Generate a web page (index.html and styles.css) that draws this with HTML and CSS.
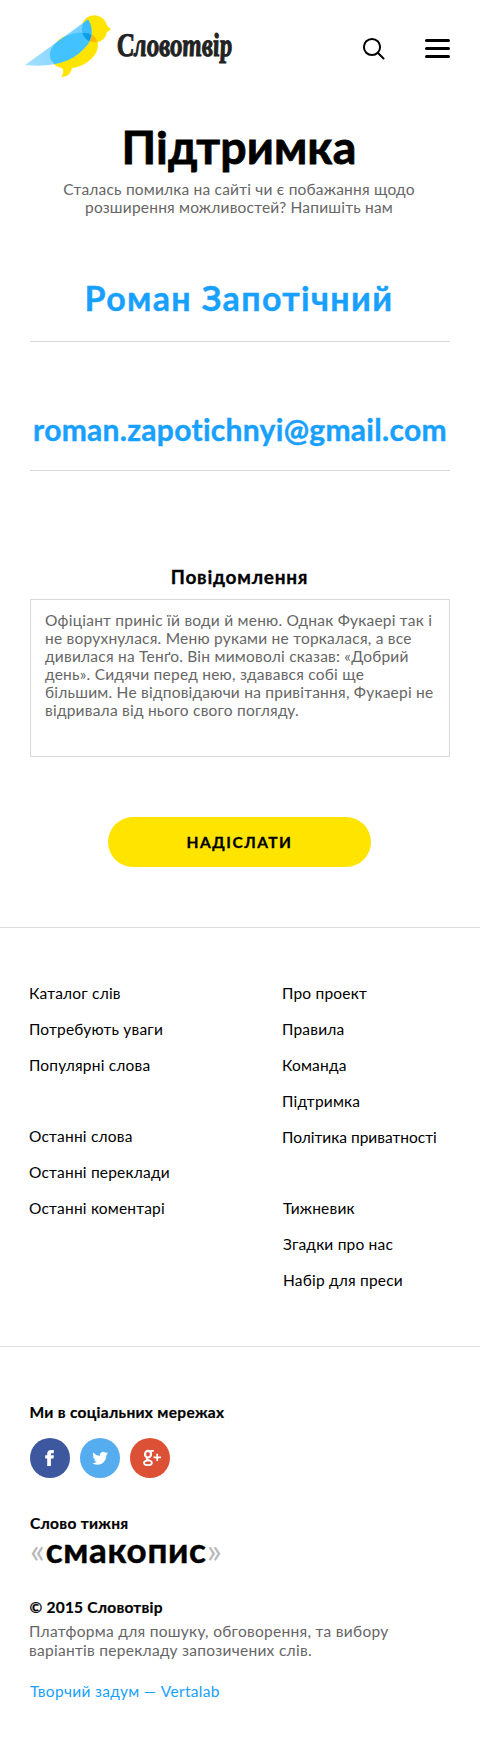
FILE: index.html
```html
<!DOCTYPE html>
<html lang="uk">
<head>
<meta charset="utf-8">
<title>Підтримка — Словотвір</title>
<link rel="stylesheet" href="styles.css">
</head>
<body>
<header class="header">
  <a class="logo" href="#" aria-label="Словотвір">
    <svg width="230" height="74" viewBox="20 11 230 74">
      <defs>
        <linearGradient id="wing" x1="26" y1="0" x2="92" y2="0" gradientUnits="userSpaceOnUse">
          <stop offset="0" stop-color="#a4e0ff"/>
          <stop offset="1" stop-color="#6accff"/>
        </linearGradient>
        <clipPath id="wing-clip"><path d="M25 64L88 18.500C93 26 92.500 36 88 43C75 60 55 67 25 64Z"/></clipPath>
        <clipPath id="head-clip"><circle cx="95" cy="28.500" r="13"/></clipPath>
      </defs>
      <path fill="#ffe400" d="M107 24.500L111 28.500L107 31A13 13 0 0 1 97.500 41.200C99.500 49 94 57 86 62C81 65 77 66.500 72 67C71 72 68 76 61 76Q65 71 62 67C57 66 53 64 51.500 58C48 43 64 31 82 31.500A13 13 0 1 1 107 24.500Z"/>
      <path fill="#ffb800" d="M90 32.500Q96 35 97.500 41.200Q93 41.800 89 40.200Z"/>
      <path fill="url(#wing)" d="M25 64L88 18.500C93 26 92.500 36 88 43C75 60 55 67 25 64Z"/>
      <g clip-path="url(#wing-clip)">
        <ellipse cx="74" cy="49" rx="25" ry="16" transform="rotate(-20 74 49)" fill="#42c2ff"/>
        <circle cx="95" cy="28.500" r="13" fill="#3cbcfc"/>
        <ellipse cx="74" cy="49" rx="25" ry="16" transform="rotate(-20 74 49)" fill="#0a9fe8" clip-path="url(#head-clip)" class="overlap"/>
        <path fill="#0a9fe8" d="M82.500 32Q88 31.500 92 34Q91 38 89 40Q84 37 82.500 32Z"/>
      </g>
      <text class="wordmark" transform="translate(118 54.500) skewX(5)" textLength="115" lengthAdjust="spacingAndGlyphs">Словотвір</text>
    </svg>
  </a>
  <div class="actions">
    <svg class="search" width="24" height="24" viewBox="0 0 24 24"><circle cx="10" cy="10" r="8.100"/><path d="M16 16L21.500 21.500"/></svg>
    <svg class="burger" width="25" height="22" viewBox="0 0 25 22"><path d="M1.500 3.500H23.500M1.500 11.500H23.500M1.500 19.500H23.500"/></svg>
  </div>
</header>

<main class="main">
  <h1 class="title">Підтримка</h1>
  <p class="intro">Сталась помилка на сайті чи є побажання щодо<br>розширення можливостей? Напишіть нам</p>
  <div class="field field-name">Роман Запотічний</div>
  <div class="field field-email">roman.zapotichnyi@gmail.com</div>
  <div class="label">Повідомлення</div>
  <div class="message">Офіціант приніс їй води й меню. Однак Фукаері так і<br>не ворухнулася. Меню руками не торкалася, а все<br>дивилася на Тенґо. Він мимоволі сказав: «Добрий<br>день». Сидячи перед нею, здавався собі ще<br>більшим. Не відповідаючи на привітання, Фукаері не<br>відривала від нього свого погляду.</div>
  <button class="submit">НАДІСЛАТИ</button>
</main>

<nav class="links">
  <div class="col">
    <ul><li>Каталог слів</li><li>Потребують уваги</li><li>Популярні слова</li></ul>
    <ul><li>Останні слова</li><li>Останні переклади</li><li>Останні коментарі</li></ul>
  </div>
  <div class="col">
    <ul><li>Про проект</li><li>Правила</li><li>Команда</li><li>Підтримка</li><li class="tight">Політика приватності</li></ul>
    <ul class="shifted"><li>Тижневик</li><li>Згадки про нас</li><li>Набір для преси</li></ul>
  </div>
</nav>

<footer class="footer">
  <h2 class="heading">Ми в соціальних мережах</h2>
  <div class="socials">
    <svg width="40" height="40" viewBox="0 0 40 40"><circle cx="20" cy="20" r="20" fill="#3d589f"/><path fill="#fff" d="M17.200 28V20.500H15.200V17.300H17.200V16C17.200 13.200 18.600 12 21 12H23.800V15.200H22.200C21.200 15.200 20.900 15.600 20.900 16.400V17.300H23.900L23.500 20.500H20.900V28Z"/></svg>
    <svg width="40" height="40" viewBox="0 0 40 40"><circle cx="20" cy="20" r="20" fill="#55acee"/><path fill="#fff" transform="translate(12.200 12.300) scale(.66)" d="M23.950 4.570a10 10 0 0 1-2.820.77 4.960 4.960 0 0 0 2.160-2.720c-.95.550-2 .950-3.130 1.180a4.920 4.920 0 0 0-8.380 4.480C7.690 8.100 4.070 6.130 1.640 3.160a4.820 4.820 0 0 0-.670 2.480c0 1.710.870 3.210 2.190 4.100a4.900 4.900 0 0 1-2.230-.620v.060a4.920 4.920 0 0 0 3.950 4.830 5 5 0 0 1-2.210.080 4.940 4.940 0 0 0 4.600 3.420A9.870 9.870 0 0 1 0 19.540a14 14 0 0 0 7.550 2.210c9.050 0 14-7.500 14-13.980 0-.210 0-.420-.020-.630a9.940 9.940 0 0 0 2.460-2.550z"/></svg>
    <svg width="40" height="40" viewBox="0 0 40 40"><circle cx="20" cy="20" r="20" fill="#dc5135"/><g fill="none" stroke="#fff"><ellipse cx="18" cy="16.200" rx="3" ry="3.300" stroke-width="2.200"/><path stroke-width="1.800" d="M18.200 12.900H23.800M20.300 13.500L21.400 15.500M17.600 19.500C15.600 20.800 17 21.600 19.300 22.400C23.300 23.800 22.500 27.200 18 27.200C13.200 27.200 12.800 23.800 16.500 22.600L19 22.300M23.500 19.400H31M27.200 15.700V23.100"/></g></svg>
  </div>
  <h2 class="heading word-label">Слово тижня</h2>
  <div class="word"><span>«</span>смакопис<span>»</span></div>
  <h2 class="heading copyright">© 2015 Словотвір</h2>
  <p class="about">Платформа для пошуку, обговорення, та вибору<br>варіантів перекладу запозичених слів.</p>
  <a class="credit" href="#">Творчий задум — Vertalab</a>
</footer>
</body>
</html>
```
FILE: styles.css
```css
* { box-sizing: border-box; }
body {
  margin: 0;
  background: #fff;
  color: #000;
  font: 15.5px/18px Lato, "Open Sans", sans-serif;
  letter-spacing: .2px;
}
h1, h2, p, ul { margin: 0; padding: 0; }
ul { list-style: none; }

.header { display: flex; justify-content: space-between; height: 118px; padding: 12px 30px 0 20px; }
.logo { display: block; height: 74px; }
.logo svg { display: block; }
.overlap { display: none; }
.wordmark { font: italic bold 33px "Liberation Serif", serif; fill: #222; stroke: #222; stroke-width: 1px; letter-spacing: 0; }
.actions { display: flex; align-items: flex-start; gap: 39px; padding-top: 25px; }
.actions svg { fill: none; stroke: #000; stroke-linecap: round; }
.search { stroke-width: 2; }
.burger { stroke-width: 3; }

.main { padding: 0 30px 60px; text-align: center; border-bottom: 1px solid #ddd; }
.title { padding-right: 2px; font-size: 46.5px; line-height: 56px; letter-spacing: .1px; -webkit-text-stroke: .8px #000; }
.intro { padding: 6px 2px 0 0; color: #666; }
.field { color: #18a0ff; font-weight: 700; border-bottom: 1px solid #d9d9d9; white-space: nowrap; -webkit-text-stroke: .4px #18a0ff; }
.field-name { margin-top: 61px; padding: 0 2px 22px 0; font-size: 34px; line-height: 42px; letter-spacing: 1.35px; }
.field-email { margin-top: 68px; padding: 1px 0 23px; font-size: 30px; line-height: 36px; letter-spacing: .3px; }
.label { margin-top: 94px; padding-right: 1px; font-size: 19px; font-weight: 700; line-height: 24px; letter-spacing: .75px; -webkit-text-stroke: .3px #000; }
.message { height: 158px; margin-top: 10px; padding: 11px 0 0 14px; border: 1px solid #d9d9d9; color: #666; text-align: left; white-space: nowrap; letter-spacing: .23px; }
.submit { display: block; width: 263px; height: 50px; margin: 60px auto 0 78px; padding: 0; border: 0; border-radius: 25px; background: #ffe400; color: #000; font: 700 15.5px/50px Lato, sans-serif; letter-spacing: 1.45px; -webkit-text-stroke: .3px #000; }

.links { display: grid; grid-template-columns: 253px 1fr; padding: 47px 0 48px 29px; border-bottom: 1px solid #e0e0e0; line-height: 36px; }
.links ul + ul { margin-top: 35px; }
.shifted { padding-left: 1px; }
.tight { letter-spacing: 0; }

.footer { padding: 55px 30px 0; }
.heading { margin-left: -.5px; font-size: 15.5px; line-height: 20px; letter-spacing: .3px; -webkit-text-stroke: .2px #000; }
.socials { display: flex; gap: 10px; margin-top: 16px; }
.word-label { margin: 36px 0 0; line-height: 18px; }
.word { font-size: 35px; font-weight: 700; line-height: 34px; letter-spacing: .7px; -webkit-text-stroke: .5px #000; }
.word span { color: #b8b8b8; font-weight: 400; -webkit-text-stroke: 0; }
.copyright { margin-top: 31px; letter-spacing: .22px; }
.about { margin: 5px 0 21px -1px; color: #666; line-height: 19px; letter-spacing: .29px; }
.credit { display: block; color: #18a0ff; line-height: 20px; letter-spacing: .33px; text-decoration: none; }
```
